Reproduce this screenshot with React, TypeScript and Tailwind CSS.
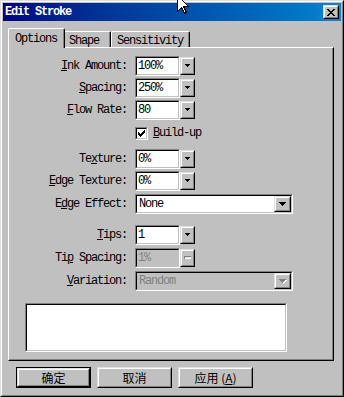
import type { ReactNode } from "react"

const raisedOuter = "border border-t-[#dfdfdf] border-l-[#dfdfdf] border-r-black border-b-black"
const raisedInner = "border border-t-white border-l-white border-r-[#808080] border-b-[#808080]"
const sunkenOuter = "border border-t-[#808080] border-l-[#808080] border-r-white border-b-white"
const sunkenInner = "border border-t-black border-l-black border-r-[#c0c0c0] border-b-[#c0c0c0]"
const mono = "font-['Liberation_Mono',monospace] text-[12px] tracking-[-1.2px] leading-none"

function Arrow({ big, disabled }: { big?: boolean; disabled?: boolean }) {
  const rows = big ? [7, 5, 3, 1] : [5, 3, 1]
  const w = rows[0]
  const shape = (dx: number, dy: number, fill: string) =>
    rows.map((n, i) => <rect key={`${dx}-${i}`} x={(w - n) / 2 + dx} y={i + dy} width={n} height={1} fill={fill} />)
  return (
    <svg width={w + 1} height={rows.length + 1} shapeRendering="crispEdges">
      {disabled && shape(1, 1, "#ffffff")}
      {shape(0, 0, disabled ? "#808080" : "#000000")}
    </svg>
  )
}

function DropButton({ disabled, dash }: { disabled?: boolean; dash?: boolean }) {
  return (
    <div className={`${raisedOuter} w-[15px] h-[18px]`}>
      <div className={`${raisedInner} h-full flex items-center justify-center bg-[#c0c0c0]`}>
        {dash ? (
          <svg width="8" height="4" shapeRendering="crispEdges">
            <rect x="0" y="0" width="7" height="3" fill="#808080" />
            <rect x="1" y="1" width="6" height="2" fill="#ffffff" />
            <rect x="1" y="1" width="5" height="1" fill="#dfdfdf" />
          </svg>
        ) : (
          <Arrow disabled={disabled} />
        )}
      </div>
    </div>
  )
}

function SmallCombo({ value, disabled }: { value: string; disabled?: boolean }) {
  return (
    <div className="flex items-center">
      <div className={`${sunkenOuter} w-[45px] h-[20px]`}>
        <div
          className={`${sunkenInner} h-full flex items-center pl-[1px] ${
            disabled ? "bg-[#c0c0c0] text-[#808080]" : "bg-white text-black"
          }`}
        >
          {value}
        </div>
      </div>
      <DropButton disabled={disabled} dash={disabled} />
    </div>
  )
}

function WideCombo({ value, disabled }: { value: string; disabled?: boolean }) {
  return (
    <div className={`${sunkenOuter} w-[158px] h-[20px]`}>
      <div
        className={`${sunkenInner} h-full flex items-center pl-[2px] ${
          disabled ? "bg-[#c0c0c0] text-[#808080]" : "bg-white text-black"
        }`}
      >
        <span className="flex-1">{value}</span>
        <div className={`${raisedOuter} w-[17px] h-[16px]`}>
          <div className={`${raisedInner} h-full flex items-center justify-center bg-[#c0c0c0]`}>
            <Arrow big disabled={disabled} />
          </div>
        </div>
      </div>
    </div>
  )
}

function Row({ label, children, mt }: { label?: ReactNode; children: ReactNode; mt: string }) {
  return (
    <div className={`flex items-center h-[20px] ${mt}`}>
      <div className="w-[118px] text-right">{label}</div>
      <div className="ml-[8px]">{children}</div>
    </div>
  )
}

function CheckMark() {
  const runs = [
    [6, 0, 1], [5, 1, 2], [0, 2, 1], [4, 2, 3], [0, 3, 2], [3, 3, 3], [0, 4, 5], [1, 5, 3], [2, 6, 1],
  ]
  return (
    <svg width="7" height="7" shapeRendering="crispEdges">
      {runs.map(([x, y, w], i) => (
        <rect key={i} x={x} y={y} width={w} height={1} fill="#000" />
      ))}
    </svg>
  )
}

function PushButton({ children, isDefault }: { children: ReactNode; isDefault?: boolean }) {
  const body = (
    <div className={`${raisedOuter} h-full`}>
      <div className={`${raisedInner} h-full flex items-center justify-center bg-[#c0c0c0]`}>{children}</div>
    </div>
  )
  return (
    <div className={`w-[75px] h-[21px] ${isDefault ? "border border-black" : ""}`}>{body}</div>
  )
}

export default function App() {
  return (
    <div className={`relative w-[344px] h-[397px] overflow-hidden bg-[#c0c0c0] text-black ${mono}`}>
      <div className={`${raisedOuter} h-full`}>
        <div className={`${raisedInner} h-full p-[1px]`}>
          {/* title bar */}
          <div className="h-[18px] flex items-center bg-linear-to-r from-[#000080] to-[#1084d0] pl-[2px] pr-[2px]">
            <span className="flex-1 text-white font-bold">Edit Stroke</span>
            <div className={`${raisedOuter} w-[16px] h-[14px]`}>
              <div className={`${raisedInner} h-full flex items-center justify-center bg-[#c0c0c0]`}>
                <svg width="8" height="7" shapeRendering="crispEdges">
                  <path d="M0 0h2v1h-2zM6 0h2v1h-2zM1 1h2v1h-2zM5 1h2v1h-2zM2 2h4v1h-4zM3 3h2v1h-2zM2 4h4v1h-4zM1 5h2v1h-2zM5 5h2v1h-2zM0 6h2v1h-2zM6 6h2v1h-2z" fill="#000" />
                </svg>
              </div>
            </div>
          </div>

          {/* tabs */}
          <div className="flex items-end mt-[7px] ml-[5px] h-[19px]">
            <div className="relative z-10 w-[57px] h-[20px] -mb-[1px] bg-[#c0c0c0] border-l border-t border-r border-l-white border-t-white border-r-black rounded-t-[2px]">
              <div className="h-full border-r border-r-[#808080] pl-[6px] pt-[4px]">Options</div>
            </div>
            <div className="w-[46px] h-[16px] border-t border-r border-t-white border-r-black rounded-tr-[2px]">
              <div className="h-full border-r border-r-[#808080] pl-[4px] pt-[3px]">Shape</div>
            </div>
            <div className="w-[79px] h-[16px] border-l border-t border-r border-l-white border-t-white border-r-black rounded-t-[2px]">
              <div className="h-full border-r border-r-[#808080] pl-[5px] pt-[3px]">Sensitivity</div>
            </div>
          </div>

          {/* panel */}
          <div className="ml-[5px] w-[326px] h-[314px] border border-l-white border-t-white border-r-black border-b-black">
            <div className="h-full border-r border-b border-r-[#808080] border-b-[#808080] flex flex-col">
              <Row mt="mt-[8px]" label={<><u>I</u>nk Amount:</>}>
                <SmallCombo value="100%" />
              </Row>
              <Row mt="mt-[2px]" label={<><u>S</u>pacing:</>}>
                <SmallCombo value="250%" />
              </Row>
              <Row mt="mt-[2px]" label={<><u>F</u>low Rate:</>}>
                <SmallCombo value="80" />
              </Row>
              <Row mt="mt-[3px]">
                <div className="flex items-center">
                  <div className={`${sunkenOuter} w-[13px] h-[13px]`}>
                    <div className={`${sunkenInner} h-full bg-white flex items-center justify-center`}>
                      <CheckMark />
                    </div>
                  </div>
                  <span className="ml-[5px]">
                    <u>B</u>uild-up
                  </span>
                </div>
              </Row>
              <Row mt="mt-[6px]" label={<>Te<u>x</u>ture:</>}>
                <SmallCombo value="0%" />
              </Row>
              <Row mt="mt-[2px]" label={<><u>E</u>dge Texture:</>}>
                <SmallCombo value="0%" />
              </Row>
              <Row mt="mt-[3px]" label={<>E<u>d</u>ge Effect:</>}>
                <WideCombo value="None" />
              </Row>
              <Row mt="mt-[11px]" label={<><u>T</u>ips:</>}>
                <SmallCombo value="1" />
              </Row>
              <Row mt="mt-[3px]" label={<>Ti<u>p</u> Spacing:</>}>
                <SmallCombo value="1%" disabled />
              </Row>
              <Row mt="mt-[3px]" label={<><u>V</u>ariation:</>}>
                <WideCombo value="Random" disabled />
              </Row>
              <div className={`${sunkenOuter} ml-[16px] mt-[12px] w-[262px] h-[49px]`}>
                <div className={`${sunkenInner} h-full bg-white`} />
              </div>
            </div>
          </div>

          {/* buttons */}
          <div className="flex gap-[6px] ml-[13px] mt-[6px] font-['Noto_Sans_CJK_SC',sans-serif] tracking-normal text-[12px]">
            <PushButton isDefault>确定</PushButton>
            <PushButton>取消</PushButton>
            <PushButton>
              应用 (<u>A</u>)
            </PushButton>
          </div>
        </div>
      </div>

      {/* mouse cursor */}
      <svg className="absolute left-[177px] top-[-5px]" width="13" height="20" shapeRendering="crispEdges">
        <path d="M0.5 0.5 L0.5 16.5 L4.5 12.5 L7.5 18.5 L9.5 17.5 L6.5 11.5 L11.5 11.5 Z" fill="#fff" stroke="#000" />
      </svg>
    </div>
  )
}
